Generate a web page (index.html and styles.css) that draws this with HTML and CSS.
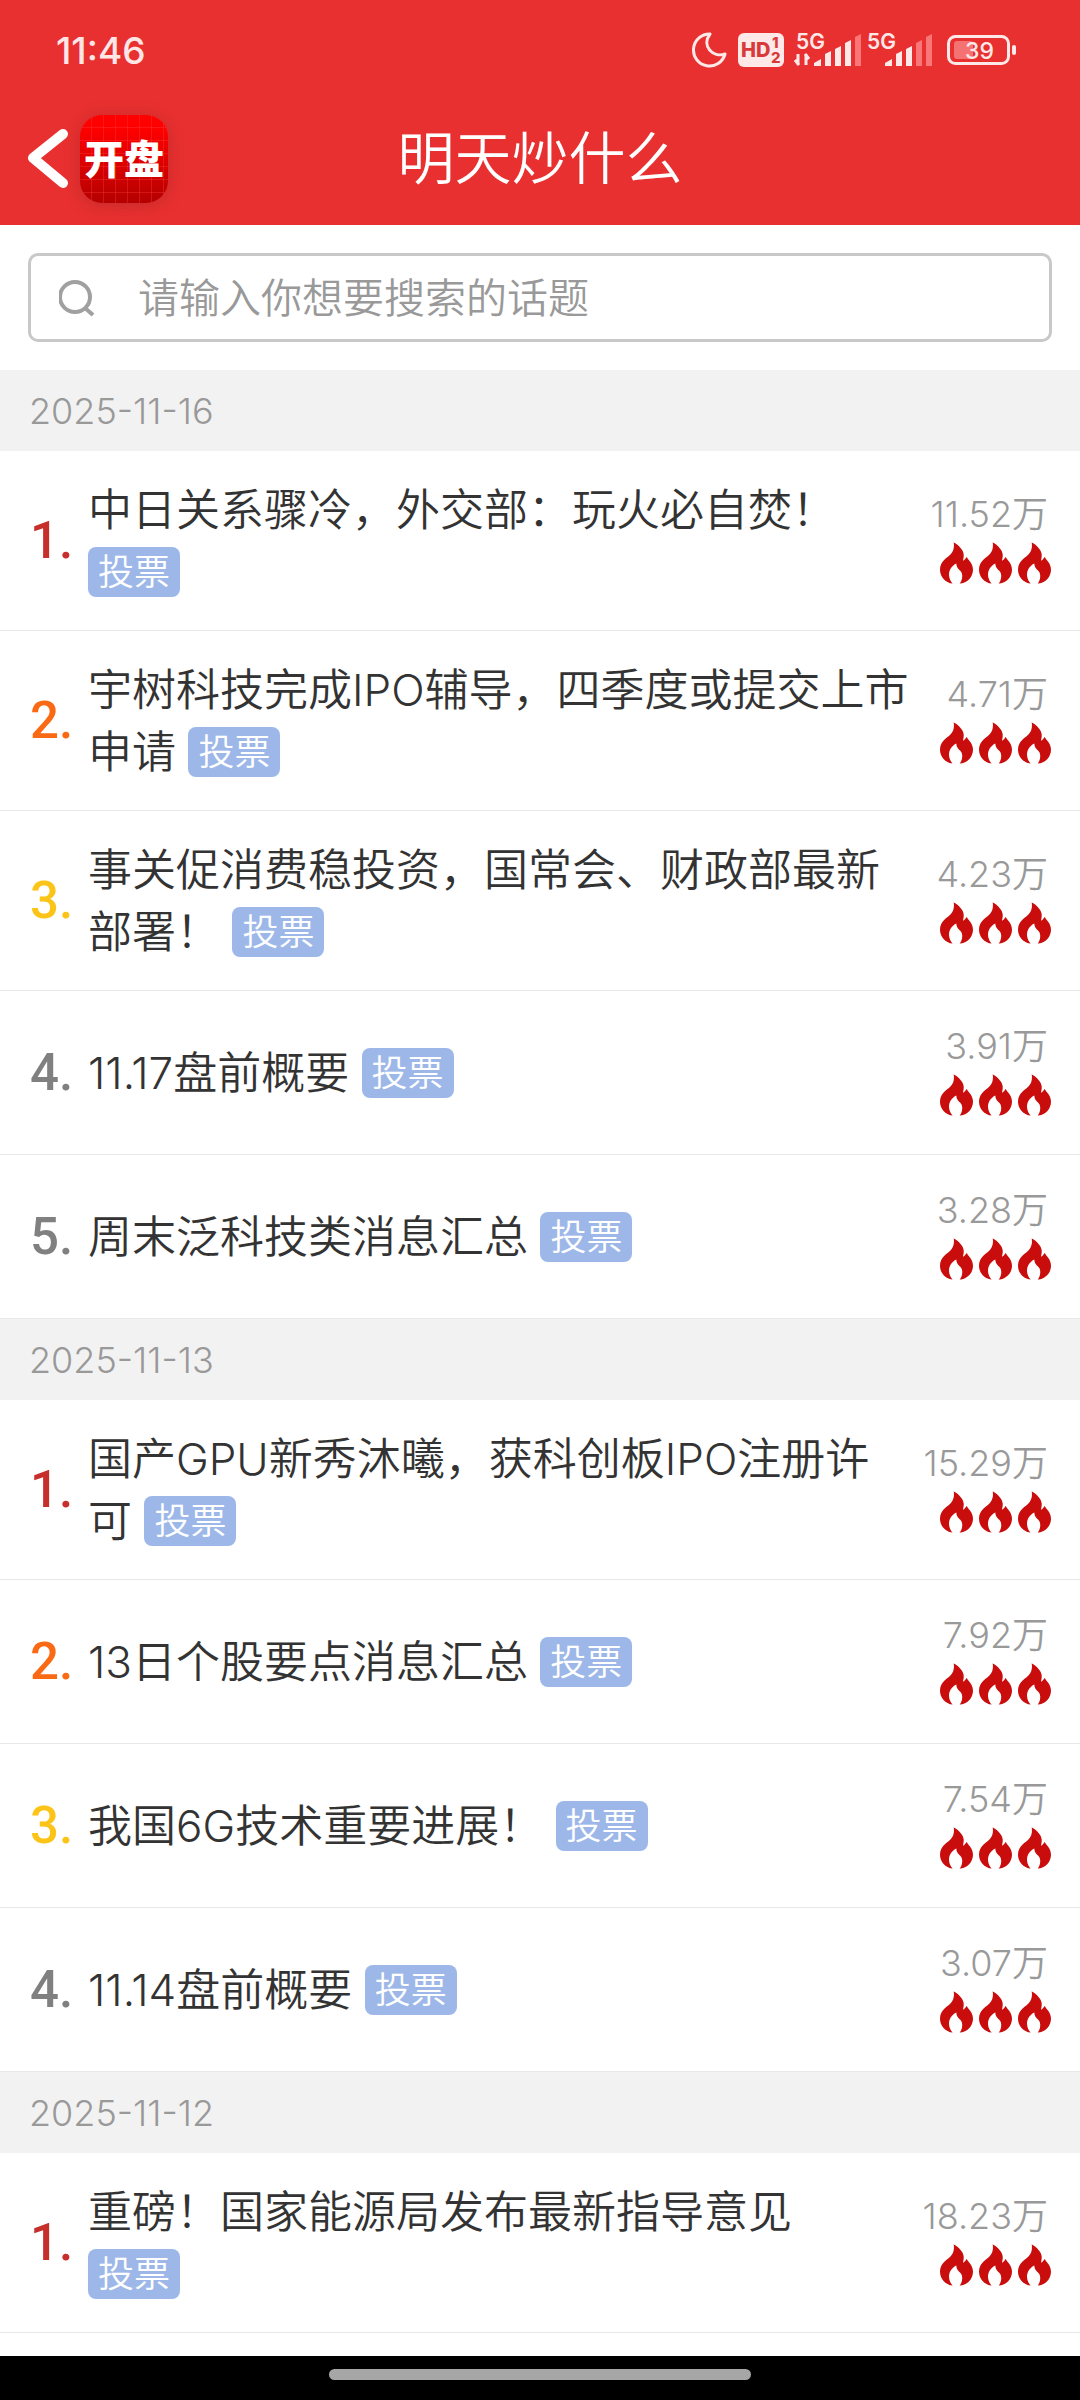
FILE: index.html
```html
<!DOCTYPE html>
<html lang="zh-CN">
<head>
<meta charset="utf-8">
<meta name="viewport" content="width=device-width, initial-scale=1">
<title>明天炒什么</title>
<link rel="stylesheet" href="styles.css">
</head>
<body>
<svg class="defs" aria-hidden="true">
  <symbol id="flame" viewBox="0 0 99 125">
    <path d="M41 0C57 9 70 24 71 36C72 46 69 52 69 56C74 53 79 48 80 44C84 54 98 62 99 82C99 105 82 122 59 125C66 115 69 103 65 92C61 83 49 80 49 64C36 70 27 83 27 98C27 110 33 119 38 125C16 121 0 105 0 82C0 55 25 47 36 31C42 22 43 10 41 0Z"/>
  </symbol>
  <symbol id="flames" viewBox="0 0 333 125">
    <use href="#flame" x="0" width="99" height="125"/>
    <use href="#flame" x="117" width="99" height="125"/>
    <use href="#flame" x="234" width="99" height="125"/>
  </symbol>
</svg>

<header class="top">
  <div class="status">
    <time class="clock">11:46</time>
    <div class="indicators">
      <svg class="moon" width="36" height="36" viewBox="0 0 36 36"><path d="M19 2A16 16 0 1 0 34 22C22 26 10 14 19 2Z"/></svg>
      <svg class="hd" width="46" height="34" viewBox="0 0 46 34"><rect width="46" height="34" rx="6"/><text x="3" y="24" class="hd-main">HD</text><text x="34" y="15" class="hd-sub">1</text><text x="33" y="30" class="hd-sub">2</text></svg>
      <svg class="signal" width="68" height="48" viewBox="0 -6 68 48">
        <text x="2" y="17">5G</text>
        <path d="M4 22v11M5 33l-4-5M12 33V22M11 22l4 5" class="traffic"/>
        <path d="M20 34v-3l7-4v7zM31 34V22l6-3v15zM41 34V17l6-3v20zM51 34V11l6-3v26z"/>
        <path class="dim" d="M61 34V5l6-3v32z"/>
      </svg>
      <svg class="signal" width="66" height="48" viewBox="0 -6 66 48">
        <text x="0" y="17">5G</text>
        <path d="M18 34v-3l7-4v7zM29 34V22l6-3v15zM39 34V17l6-3v20z"/>
        <path class="dim" d="M49 34V11l6-3v26zM59 34V5l6-3v32z"/>
      </svg>
      <svg class="battery" width="70" height="30" viewBox="0 0 70 30"><rect class="case" x="1.5" y="1.5" width="60" height="27" rx="7"/><rect class="level" x="7" y="6" width="19" height="18" rx="3"/><rect x="65" y="10" width="4" height="10" rx="2"/><text x="18" y="24">39</text></svg>
    </div>
  </div>
  <div class="bar">
    <a class="back" href="#" aria-label="返回"><svg width="40" height="60" viewBox="0 0 40 60"><path d="M35 5L5 29L35 54"/></svg></a>
    <a class="logo" href="#">开盘</a>
    <h1>明天炒什么</h1>
  </div>
</header>

<main>
  <form class="search">
    <label class="field">
      <svg width="36" height="38" viewBox="0 0 36 38"><circle cx="16" cy="18" r="15"/><path d="M26 29l8 7"/></svg>
      <input type="search" aria-label="搜索话题" placeholder="请输入你想要搜索的话题">
    </label>
  </form>

  <section>
    <h2>2025-11-16</h2>
    <ol>
      <li><span class="rank first">1.</span><p class="topic"><a href="#">中日关系骤冷，外交部：玩火必自焚！</a> <span class="vote">投票</span></p><div class="heat"><span>11.52万</span><svg><use href="#flames"/></svg></div></li>
      <li><span class="rank second">2.</span><p class="topic"><a href="#">宇树科技完成IPO辅导，四季度或提交上市申请</a> <span class="vote">投票</span></p><div class="heat"><span>4.71万</span><svg><use href="#flames"/></svg></div></li>
      <li><span class="rank third">3.</span><p class="topic"><a href="#">事关促消费稳投资，国常会、财政部最新部署！</a> <span class="vote">投票</span></p><div class="heat"><span>4.23万</span><svg><use href="#flames"/></svg></div></li>
      <li><span class="rank">4.</span><p class="topic"><a href="#">11.17盘前概要</a> <span class="vote">投票</span></p><div class="heat"><span>3.91万</span><svg><use href="#flames"/></svg></div></li>
      <li><span class="rank">5.</span><p class="topic"><a href="#">周末泛科技类消息汇总</a> <span class="vote">投票</span></p><div class="heat"><span>3.28万</span><svg><use href="#flames"/></svg></div></li>
    </ol>
  </section>

  <section>
    <h2>2025-11-13</h2>
    <ol>
      <li><span class="rank first">1.</span><p class="topic"><a href="#">国产GPU新秀沐曦，获科创板IPO注册许可</a> <span class="vote">投票</span></p><div class="heat"><span>15.29万</span><svg><use href="#flames"/></svg></div></li>
      <li><span class="rank second">2.</span><p class="topic"><a href="#">13日个股要点消息汇总</a> <span class="vote">投票</span></p><div class="heat"><span>7.92万</span><svg><use href="#flames"/></svg></div></li>
      <li><span class="rank third">3.</span><p class="topic"><a href="#">我国6G技术重要进展！</a> <span class="vote">投票</span></p><div class="heat"><span>7.54万</span><svg><use href="#flames"/></svg></div></li>
      <li><span class="rank">4.</span><p class="topic"><a href="#">11.14盘前概要</a> <span class="vote">投票</span></p><div class="heat"><span>3.07万</span><svg><use href="#flames"/></svg></div></li>
    </ol>
  </section>

  <section>
    <h2>2025-11-12</h2>
    <ol>
      <li><span class="rank first">1.</span><p class="topic"><a href="#">重磅！国家能源局发布最新指导意见</a> <span class="vote">投票</span></p><div class="heat"><span>18.23万</span><svg><use href="#flames"/></svg></div></li>
    </ol>
  </section>
</main>

<footer class="home"><span></span></footer>
</body>
</html>
```
FILE: styles.css
```css
* { box-sizing: border-box; }

body {
  margin: 0;
  min-height: 100vh;
  display: flex;
  flex-direction: column;
  background: #fff;
  color: #333;
  font-family: Inter, "Noto Sans CJK SC", sans-serif;
  font-weight: 350;
}

a { color: inherit; text-decoration: none; }
h1, h2, p, ol { margin: 0; padding: 0; font-weight: 350; }
ol { list-style: none; }
svg { display: block; flex: none; }
.defs { position: absolute; width: 0; height: 0; }

/* Header */
.top { background: #e83030; color: #fff; }

.status {
  display: flex;
  align-items: center;
  justify-content: space-between;
  height: 100px;
  padding: 0 63px 0 56px;
}
.clock { font-size: 37px; font-weight: 500; color: #ffe6e6; }
.indicators { display: flex; align-items: center; }
.indicators svg { fill: #ffe8e8; }
.indicators text { font-family: Inter, sans-serif; font-weight: 600; }
.indicators .moon { fill: none; stroke: #ffe8e8; stroke-width: 3; stroke-linejoin: round; }
.hd { margin: 0 10px 0 11px; }
.indicators .hd text { fill: #d83a3a; font-weight: 800; }
.hd .hd-main { font-size: 20px; }
.hd .hd-sub { font-size: 15px; }
.signal { margin-right: 5px; }
.signal text { font-size: 21px; }
.signal .dim { fill: #fb7676; }
.signal .traffic { fill: none; stroke: #ffe8e8; stroke-width: 3; }
.battery { margin-left: 9px; }
.battery .case { fill: none; stroke: #ffe8e8; stroke-width: 3; }
.battery .level { fill: #f47272; }
.indicators .battery text { font-size: 23px; font-weight: 500; }

.bar {
  display: grid;
  grid-template-columns: 40px 88px 1fr 140px;
  column-gap: 12px;
  align-items: center;
  height: 125px;
  padding: 0 28px 7px;
}
.back path { fill: none; stroke: #fff; stroke-width: 10; stroke-linecap: round; stroke-linejoin: round; }
.logo {
  display: flex;
  align-items: center;
  justify-content: center;
  height: 88px;
  padding-bottom: 4px;
  border-radius: 22px;
  font-size: 40px;
  font-weight: 900;
  background:
    repeating-linear-gradient(90deg, transparent 0 11px, #ff404055 11px 12px),
    repeating-linear-gradient(transparent 0 12px, #ff404055 12px 13px),
    linear-gradient(#ff0000 15%, #b40000);
  box-shadow: 0 2px 16px #80202055;
}
.bar h1 { font-size: 57px; line-height: 80px; text-align: center; }

/* Search */
.search { padding: 28px; }
.field {
  display: flex;
  align-items: center;
  gap: 43px;
  height: 89px;
  padding: 0 28px;
  border: 3px solid #c8c8c8;
  border-radius: 10px;
}
.field svg { fill: none; stroke: #a0a0a0; stroke-width: 4; }
.field input {
  flex: 1;
  min-width: 0;
  padding: 0;
  border: 0;
  outline: 0;
  background: none;
  font: inherit;
  font-size: 41px;
  color: #333;
}
.field input::placeholder { color: #999; opacity: 1; }

/* Topic list */
h2 {
  padding: 1px 29px 0;
  background: #f2f2f2;
  color: #999;
  font-size: 36px;
  line-height: 80px;
}
li {
  display: grid;
  grid-template-columns: 58px 1fr 140px;
  align-items: center;
  padding: 28px 29px 27px 30px;
  border-bottom: 1px solid #e8e8e8;
}
.rank { font: 500 51px/60px Roboto, sans-serif; color: #808080; }
.rank.first { color: #c62f2b; }
.rank.second { color: #fa6a14; }
.rank.third { color: #fcc418; }
.topic { font-size: 44px; line-height: 62px; }
.vote {
  display: inline-block;
  margin-right: 20px;
  padding: 0 10px;
  border-radius: 8px;
  background: #9db8e8;
  color: #fff;
  font-size: 36px;
  line-height: 50px;
  vertical-align: 3px;
}
.heat {
  display: flex;
  flex-direction: column;
  align-items: flex-end;
  height: 108px;
  color: #999;
}
.heat span { padding-right: 3px; font-size: 36px; line-height: 55px; white-space: nowrap; }
.heat svg { width: 111px; height: 42px; fill: #c90c0c; }

/* Gesture bar */
.home {
  display: flex;
  justify-content: center;
  height: 44px;
  margin-top: auto;
  padding-top: 13px;
  background: #000;
}
.home span { width: 39%; height: 11px; border-radius: 6px; background: #a6a6a6; }
```
